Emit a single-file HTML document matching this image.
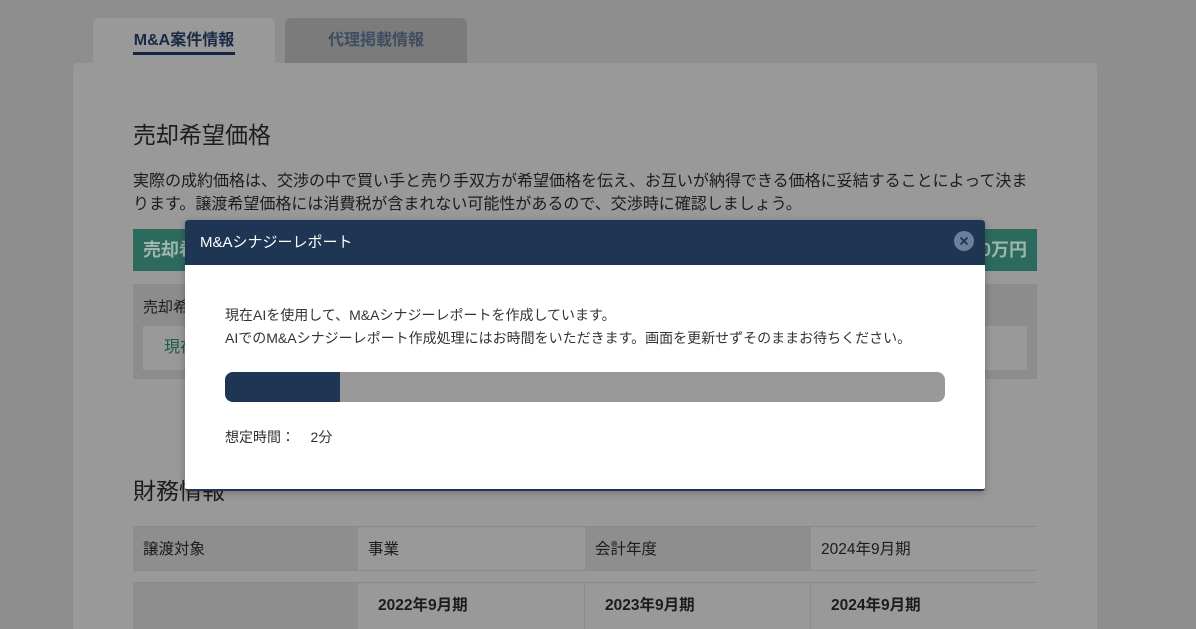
<!DOCTYPE html>
<html><head><meta charset="utf-8"><style>
*{margin:0;padding:0;box-sizing:border-box}
html,body{width:1196px;height:629px;overflow:hidden}
body{background:#8e8e8e;font-family:"Liberation Sans","Noto Sans CJK JP",sans-serif;color:#1c1c1c;position:relative}
.abs{position:absolute}
.tab{top:18px;height:46px;width:182px;border-radius:6px 6px 0 0;text-align:center;font-weight:bold;font-size:16px;line-height:46px}
.card{left:73px;top:63px;width:1024px;height:580px;background:#999;border-radius:4px}
.cell{height:45px;line-height:45px;font-size:15.5px;padding-left:10px;border-top:1px solid #8a8a8a;border-bottom:1px solid #8a8a8a}
</style></head><body>
<div class="abs tab" style="left:93px;background:#999;color:#1a2a45">M&amp;A案件情報<div class="abs" style="left:40px;top:34px;width:102px;height:3px;background:#142640"></div></div>
<div class="abs tab" style="left:285px;background:#7b7b7b;color:#3e4d62">代理掲載情報</div>
<div class="abs card"></div>
<div class="abs" style="left:133px;top:116px;font-size:23px">売却希望価格</div>
<div class="abs" style="left:133px;top:170px;width:900px;font-size:16px;line-height:23px">実際の成約価格は、交渉の中で買い手と売り手双方が希望価格を伝え、お互いが納得できる価格に妥結することによって決まります。譲渡希望価格には消費税が含まれない可能性があるので、交渉時に確認しましょう。</div>
<div class="abs" style="left:133px;top:229px;width:904px;height:42px;background:#2c6a5e;color:#9fb5ae;font-weight:bold;font-size:18px;line-height:42px;padding-left:10px">売却希<span style="position:absolute;right:10px">0万円</span></div>
<div class="abs" style="left:133px;top:284px;width:904px;height:95px;background:#8c8c8c"></div>
<div class="abs" style="left:143px;top:296px;font-size:15px">売却希</div>
<div class="abs" style="left:143px;top:326px;width:884px;height:44px;background:#999;color:#1f5a4e;font-size:16px;line-height:44px;padding-left:21px">現在</div>
<div class="abs" style="left:133px;top:472px;font-size:23px">財務情報</div>
<div class="abs cell" style="left:133px;top:526px;width:225px;background:#8e8e8e">譲渡対象</div>
<div class="abs cell" style="left:358px;top:526px;width:227px;background:#999">事業</div>
<div class="abs cell" style="left:585px;top:526px;width:226px;background:#8e8e8e">会計年度</div>
<div class="abs cell" style="left:811px;top:526px;width:226px;background:#999">2024年9月期</div>
<div class="abs cell" style="left:133px;top:582px;width:225px;height:50px;background:#8e8e8e"></div>
<div class="abs cell" style="left:358px;top:582px;width:227px;height:50px;background:#999;font-weight:bold;padding-left:20px;border-right:1px solid #8a8a8a">2022年9月期</div>
<div class="abs cell" style="left:585px;top:582px;width:226px;height:50px;background:#999;font-weight:bold;padding-left:20px;border-right:1px solid #8a8a8a">2023年9月期</div>
<div class="abs cell" style="left:811px;top:582px;width:226px;height:50px;background:#999;font-weight:bold;padding-left:20px">2024年9月期</div>

<div class="abs" style="left:185px;top:220px;width:800px;height:271px;background:#fff;border-radius:3px;overflow:hidden;box-shadow:0 2px 8px rgba(0,0,0,.25);border-bottom:2px solid #1e3654">
<div style="height:45px;background:#1e3654;color:#fff;font-size:15px;line-height:45px;padding-left:15px">M&amp;Aシナジーレポート</div>
<div class="abs" style="left:769px;top:11px;width:20px;height:20px;border-radius:50%;background:#6c7f98"><svg width="20" height="20"><path d="M6.5 6.5l7 7M13.5 6.5l-7 7" stroke="#1e3654" stroke-width="1.8"/></svg></div>
<div class="abs" style="left:40px;top:84px;font-size:14px;line-height:23px;color:#333">現在AIを使用して、M&amp;Aシナジーレポートを作成しています。<br>AIでのM&amp;Aシナジーレポート作成処理にはお時間をいただきます。画面を更新せずそのままお待ちください。</div>
<div class="abs" style="left:40px;top:152px;width:720px;height:30px;border-radius:8px;background:#999;overflow:hidden"><div style="width:115px;height:30px;background:#1e3654"></div></div>
<div class="abs" style="left:40px;top:207px;font-size:14px;color:#333">想定時間：&nbsp;&nbsp;&nbsp;&nbsp;2分</div>
</div>
</body></html>
